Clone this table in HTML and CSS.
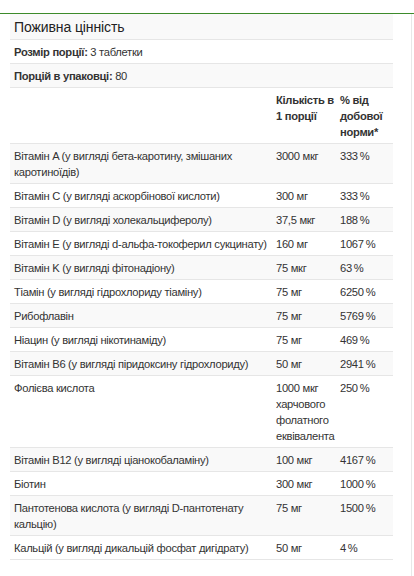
FILE: index.html
```html
<!DOCTYPE html>
<html>
<head>
<meta charset="utf-8">
<meta name="viewport" content="width=device-width, initial-scale=1">
<title>Поживна цінність</title>
<link rel="stylesheet" href="styles.css">
</head>
<body>
<div class="panel">
  <div class="facts">
    <table class="facts__table">
      <colgroup>
        <col class="facts__col-name">
        <col class="facts__col-amount">
        <col class="facts__col-dv">
      </colgroup>
      <tr class="facts__title"><td colspan="3">Поживна цінність</td></tr>
      <tr><td colspan="3"><b>Розмір порції:</b> 3 таблетки</td></tr>
      <tr><td colspan="3"><b>Порцій в упаковці:</b> 80</td></tr>
      <tr class="facts__head">
        <td></td>
        <td>Кількість в 1 порції</td>
        <td>% від добової норми*</td>
      </tr>
      <tr><td>Вітамін A (у вигляді бета-каротину, змішаних каротиноїдів)</td><td>3000 мкг</td><td>333&#8201;%</td></tr>
      <tr><td>Вітамін C (у вигляді аскорбінової кислоти)</td><td>300 мг</td><td>333&#8201;%</td></tr>
      <tr><td>Вітамін D (у вигляді холекальциферолу)</td><td>37,5 мкг</td><td>188&#8201;%</td></tr>
      <tr><td>Вітамін E (у вигляді d-альфа-токоферил сукцинату)</td><td>160 мг</td><td>1067&#8201;%</td></tr>
      <tr><td>Вітамін K (у вигляді фітонадіону)</td><td>75 мкг</td><td>63&#8201;%</td></tr>
      <tr><td>Тіамін (у вигляді гідрохлориду тіаміну)</td><td>75 мг</td><td>6250&#8201;%</td></tr>
      <tr><td>Рибофлавін</td><td>75 мг</td><td>5769&#8201;%</td></tr>
      <tr><td>Ніацин (у вигляді нікотинаміду)</td><td>75 мг</td><td>469&#8201;%</td></tr>
      <tr><td>Вітамін B6 (у вигляді піридоксину гідрохлориду)</td><td>50 мг</td><td>2941&#8201;%</td></tr>
      <tr><td>Фолієва кислота</td><td>1000 мкг харчового фолатного еквівалента</td><td>250&#8201;%</td></tr>
      <tr><td>Вітамін B12 (у вигляді ціанокобаламіну)</td><td>100 мкг</td><td>4167&#8201;%</td></tr>
      <tr><td>Біотин</td><td>300 мкг</td><td>1000&#8201;%</td></tr>
      <tr><td>Пантотенова кислота (у вигляді D-пантотенату кальцію)</td><td>75 мг</td><td>1500&#8201;%</td></tr>
      <tr><td>Кальцій (у вигляді дикальцій фосфат дигідрату)</td><td>50 мг</td><td>4&#8201;%</td></tr>
    </table>
  </div>
  <div class="side"></div>
</div>
</body>
</html>
```

FILE: styles.css
```css
*,
*::before,
*::after {
  box-sizing: border-box;
}

body {
  margin: 0;
  font-family: "Liberation Sans", Arial, sans-serif;
  font-size: 11.2px;
  letter-spacing: -0.3px;
  color: #333;
  background: #fff;
}

.panel {
  display: flex;
  margin-top: 13px;
  border-top: 1px solid #3d8b2b;
  min-height: 563px;
}

.facts {
  width: 383px;
  margin-left: 10px;
}

.side {
  flex: 1;
  margin-left: 18px;
  border-left: 1px solid #e8e8e8;
}

.facts__table {
  width: 100%;
  border-collapse: collapse;
  table-layout: fixed;
}

.facts__col-name {
  width: 262px;
}

.facts__col-amount {
  width: 64px;
}

.facts__col-dv {
  width: 57px;
}

.facts__table td {
  padding: 4px 2px 3px 4px;
  line-height: 16px;
  vertical-align: top;
  border-bottom: 1px solid #e6e6e6;
}

.facts__table tr:nth-child(odd) {
  background: #f9f9f9;
}

.facts__title td {
  font-size: 14px;
  letter-spacing: -0.1px;
  line-height: 18px;
  color: #222;
}

.facts__head td {
  font-weight: bold;
}
```
